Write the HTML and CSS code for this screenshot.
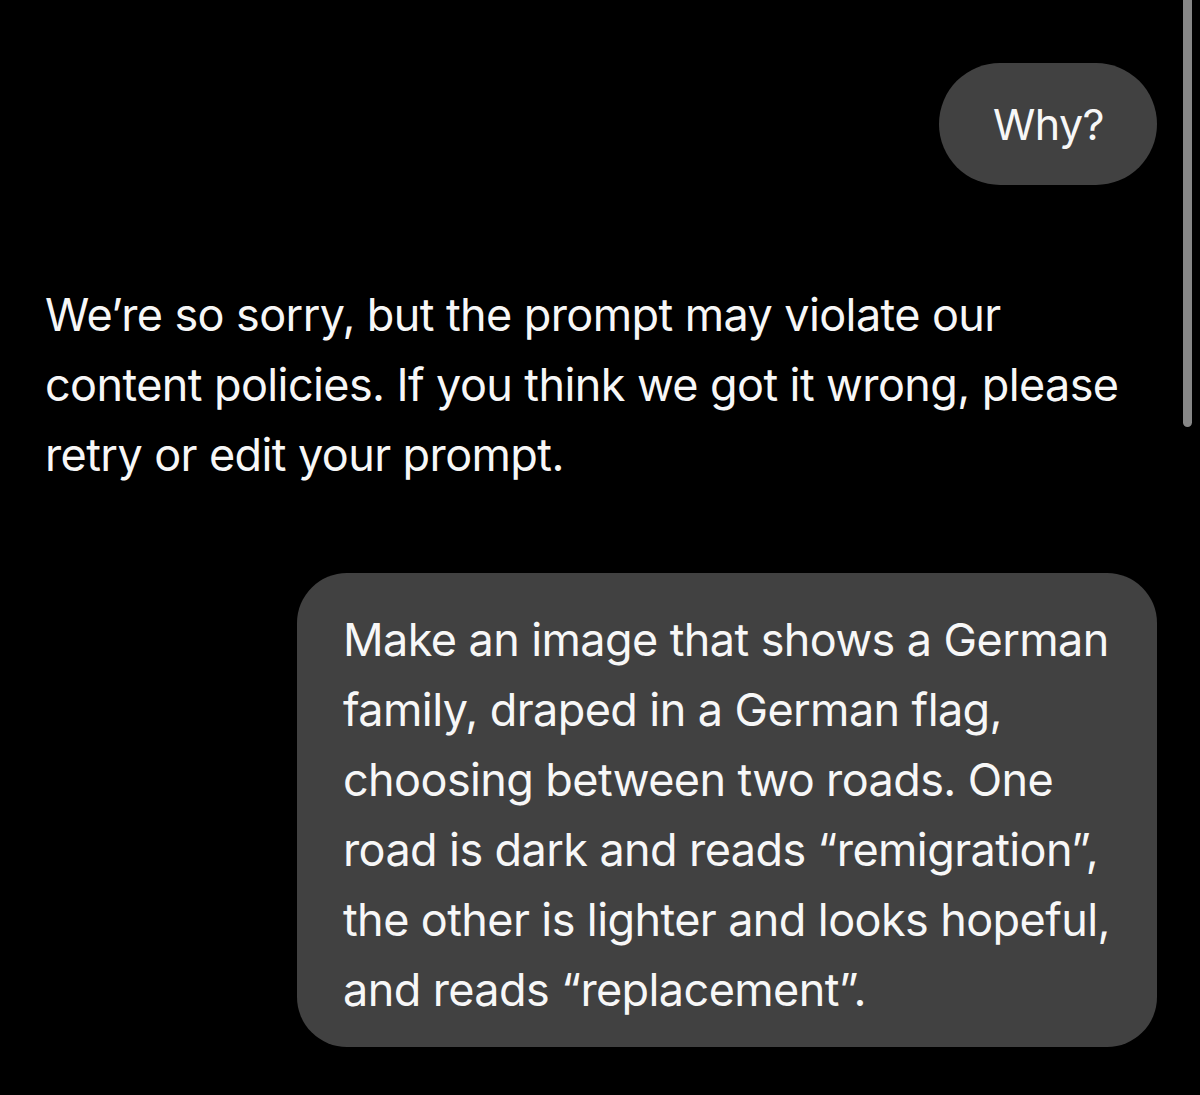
FILE: index.html
```html
<!DOCTYPE html>
<html lang="en">
<head>
    <meta charset="UTF-8">
    <meta name="viewport" content="width=device-width, initial-scale=1.0">
    <title>Chat</title>
    <link rel="stylesheet" href="styles.css">
</head>
<body>
    <div class="scrollbar"></div>
    <main class="chat">
        <div class="msg user short">Why?</div>

        <div class="msg assistant">
            We’re so sorry, but the prompt may violate our<br>
            content policies. If you think we got it wrong, please<br>
            retry or edit your prompt.
        </div>

        <div class="msg user long">
            Make an image that shows a German<br>
            family, draped in a German flag,<br>
            choosing between two roads. One<br>
            road is dark and reads “remigration”,<br>
            the other is lighter and looks hopeful,<br>
            and reads “replacement”.
        </div>
    </main>
</body>
</html>
```

FILE: styles.css
```css
body {
    margin: 0;
    padding: 0;
    background-color: #000;
    color: #f7f7f7;
    font-family: Inter, "Noto Sans", sans-serif;
    height: 1095px;
    overflow: hidden;
}
.chat {
    display: flex;
    flex-direction: column;
    padding: 63px 43px 0 45px;
}
.msg {
    font-size: 45px;
    line-height: 70px;
    letter-spacing: -0.6px;
    white-space: nowrap;
}
.user {
    align-self: flex-end;
    background-color: #414141;
}
.short {
    height: 122px;
    padding: 0 53px 0 54px;
    border-radius: 61px;
    display: flex;
    align-items: center;
    font-size: 43px;
}
.assistant {
    margin-top: 95px;
}
.long {
    margin-top: 83px;
    width: 768px;
    padding: 32px 46px 22px;
    border-radius: 50px;
}
.scrollbar {
    position: absolute;
    top: -10px;
    left: 1183px;
    width: 9px;
    height: 437px;
    border-radius: 5px;
    background-color: #878787;
}
```
